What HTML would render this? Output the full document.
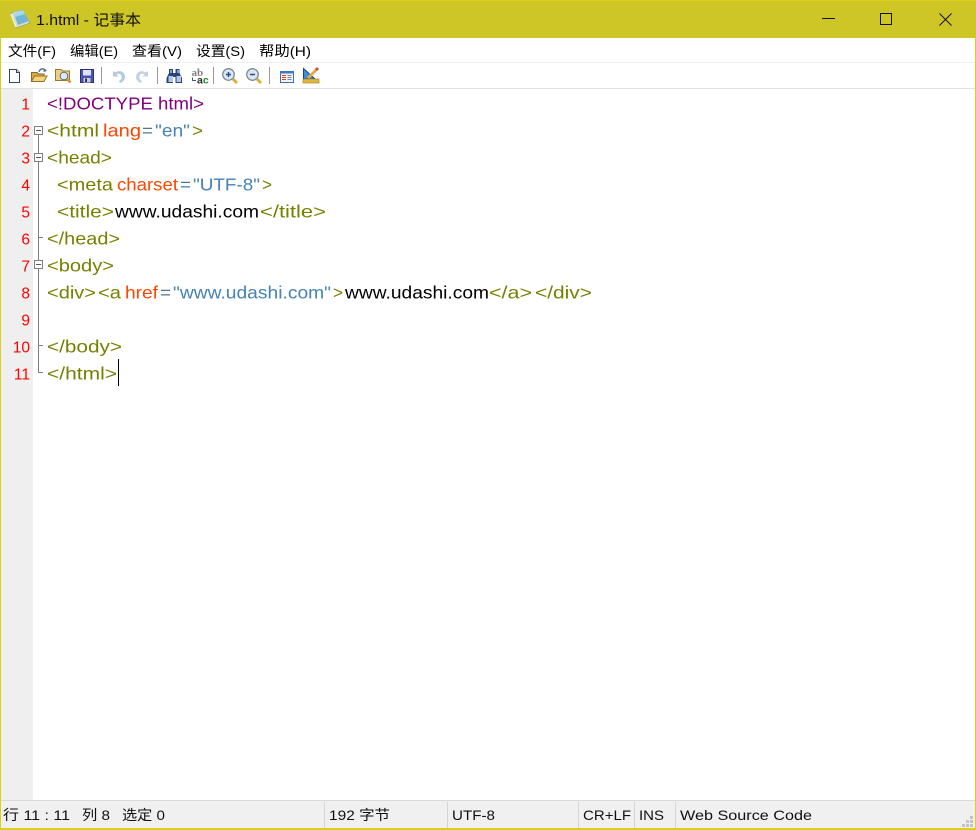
<!DOCTYPE html>
<html lang="zh">
<head>
<meta charset="UTF-8">
<title>1.html - 记事本</title>
<style>
html,body{margin:0;padding:0;background:#fff;width:976px;height:830px;overflow:hidden}
svg{display:block;position:absolute;left:0;top:0}
text{font-family:"Liberation Sans","Noto Sans CJK SC",sans-serif;white-space:pre}
.c text{font-size:17.5px}
.m text{font-size:14px;fill:#000}
.s text{font-size:14px;fill:#111}
.n text{font-size:15.5px;fill:#f00;text-anchor:end}
.t{fill:#768000}.a{fill:#ff4500}.e{fill:#4f7a94}.v{fill:#4682b4}.d{fill:#800080}.b{fill:#000}
</style>
</head>
<body>
<svg width="976" height="830" viewBox="0 0 976 830" xmlns="http://www.w3.org/2000/svg">
<!-- frame -->
<rect width="976" height="830" fill="#fff"/>
<rect width="976" height="38" fill="#cec626"/>
<rect width="976" height="1" fill="#dcd118"/>
<rect x="0" y="38" width="1" height="792" fill="#dcd118"/>
<rect x="975" y="38" width="1" height="792" fill="#dcd118"/>
<rect x="1" y="62" width="974" height="1" fill="#f0f0f0"/>
<rect x="1" y="88" width="974" height="1" fill="#e0e0e0"/>
<rect x="1" y="89" width="32" height="711" fill="#efefef"/>
<rect x="1" y="800" width="974" height="28" fill="#f0f0f0"/>
<rect x="1" y="800" width="974" height="1" fill="#d9d9d9"/>
<rect x="0" y="828" width="976" height="2" fill="#dcd118"/>

<!-- notepad icon -->
<path d="M11 13 L22 10 L30 23 L16 28 Z" fill="#d8dcc8" stroke="#8a8f70" stroke-width=".6"/>
<path d="M13 12 L23 10 L29 21 L18 25 Z" fill="#6fb6d6"/>
<path d="M13 12 L23 10 L25 14 L15 17 Z" fill="#a9d8e6"/>
<path d="M11 14 L16 27" stroke="#f0f0e0" stroke-width="1.5" fill="none"/>

<!-- title -->
<text x="36" y="25" font-size="15" fill="#111" textLength="105" lengthAdjust="spacingAndGlyphs">1.html - 记事本</text>

<!-- window controls -->
<rect x="822" y="18" width="13" height="1" fill="#111"/>
<rect x="880.5" y="13.5" width="11" height="11" fill="none" stroke="#111" stroke-width="1"/>
<path d="M939.5 13.5 L951.5 25.5 M951.5 13.5 L939.5 25.5" stroke="#111" stroke-width="1" fill="none"/>

<!-- menu -->
<g class="m">
<text x="8" y="56" textLength="48" lengthAdjust="spacingAndGlyphs">文件(F)</text>
<text x="70" y="56" textLength="48" lengthAdjust="spacingAndGlyphs">编辑(E)</text>
<text x="132" y="56" textLength="50" lengthAdjust="spacingAndGlyphs">查看(V)</text>
<text x="196" y="56" textLength="49" lengthAdjust="spacingAndGlyphs">设置(S)</text>
<text x="259" y="56" textLength="52" lengthAdjust="spacingAndGlyphs">帮助(H)</text>
</g>

<!-- toolbar: new -->
<path d="M9.5 69.5 H16.5 L19.5 72.5 V82.5 H9.5 Z" fill="#fbfcfe" stroke="#33475f"/>
<path d="M16.5 69.5 V72.5 H19.5" fill="#dfe6ef" stroke="#33475f"/>
<!-- open -->
<path d="M31.5 81.5 V72.5 H37 L38.5 74 H44 V81.5 Z" fill="#d9a94a" stroke="#8a6a28"/>
<path d="M31.5 81.5 L34.5 76 H47 L44 81.5 Z" fill="#f6d27a" stroke="#97742c"/>
<path d="M39 72 C40 68.5 43 68 45.5 70" fill="none" stroke="#4a6a98" stroke-width="1.3"/>
<path d="M44 68.5 L47 71 L43.5 72 Z" fill="#4a6a98"/>
<!-- browse -->
<path d="M55.5 80.5 V69.5 H61 L62.5 71 H69.5 V80.5 Z" fill="#ecd089" stroke="#97792f"/>
<circle cx="64" cy="76" r="3.8" fill="#dfeaf4" stroke="#5c6c80"/>
<path d="M67 79 L70.5 82.5" stroke="#d9902a" stroke-width="2.6"/>
<!-- save -->
<rect x="80.5" y="69.5" width="13" height="13" fill="#4a55b0" stroke="#2b3275"/>
<rect x="83" y="70" width="8" height="5.5" fill="#dfe3f6"/>
<rect x="83.5" y="78" width="7" height="4.5" fill="#c8cbdc"/>
<rect x="85" y="78.5" width="2" height="3.5" fill="#30345c"/>

<rect x="101" y="67" width="1" height="17" fill="#9a9a9a"/>

<!-- undo / redo (disabled) -->
<path d="M113 71 V76.5 H118.5 L116.5 74.5 C118.5 73 121 74 121.5 76 C122 78 121 80 119 81 L120 83 C124 82 126 78 124.5 74.5 C123 71 118.5 70 115.5 72.5 L113 71 Z" fill="#b6c8e0"/>
<path d="M148 71 V76.5 H142.5 L144.5 74.5 C142.5 73 140 74 139.5 76 C139 78 140 80 142 81 L141 83 C137 82 135 78 136.5 74.5 C138 71 142.5 70 145.5 72.5 L148 71 Z" fill="#c4d2e6"/>

<rect x="157" y="67" width="1" height="17" fill="#9a9a9a"/>

<!-- find binoculars -->
<path d="M169 69 h4 v4 h2.5 v-4 h4 v4 l2.5 5 v5 h-6.5 v-6 h-2.5 v6 h-6.5 v-5 l2.5 -5 Z" fill="#2a4478"/>
<rect x="168.5" y="76" width="4.5" height="6" fill="#b4c8e6"/>
<rect x="176.5" y="76" width="4.5" height="6" fill="#b4c8e6"/>
<rect x="170" y="70" width="2" height="3" fill="#8aa4d0"/>
<rect x="177" y="70" width="2" height="3" fill="#8aa4d0"/>

<!-- replace -->
<text x="191.500" y="76" font-size="11" font-weight="bold" fill="#808080" style="font-family:'Liberation Serif',serif">ab</text>
<text x="197" y="83.500" font-size="10.500" font-weight="bold" fill="#2a2a2a">a<tspan fill="#1e8a2a">c</tspan></text>
<path d="M192.500 77.500 V80.500 H196" fill="none" stroke="#3a5a90" stroke-width="1"/>

<rect x="213" y="67" width="1" height="17" fill="#9a9a9a"/>

<!-- zoom in -->
<circle cx="228.500" cy="74.500" r="5.800" fill="#dbe6ef" stroke="#7c8a98" stroke-width="1.300"/>
<path d="M226 74.500 H231 M228.500 72 V77" stroke="#2a4a90" stroke-width="1.500"/>
<path d="M233 79 L237 83" stroke="#d9b040" stroke-width="3"/>
<!-- zoom out -->
<circle cx="252.500" cy="74.500" r="5.800" fill="#dbe6ef" stroke="#7c8a98" stroke-width="1.300"/>
<path d="M250 74.500 H255" stroke="#2a4a90" stroke-width="1.500"/>
<path d="M257 79 L261 83" stroke="#d9b040" stroke-width="3"/>

<rect x="269" y="67" width="1" height="17" fill="#9a9a9a"/>

<!-- panel icon -->
<rect x="280.500" y="71.500" width="13" height="11" fill="#f6f3ee" stroke="#3f6fb5"/>
<rect x="280" y="71" width="14" height="2.500" fill="#3f78c8"/>
<path d="M282 75.500 h4 M282 77.500 h4 M282 79.500 h4" stroke="#d04a2a" stroke-width="1"/>
<path d="M287.500 75.500 h4 M287.500 77.500 h4 M287.500 79.500 h4" stroke="#7088b0" stroke-width="1"/>

<!-- settings icon -->
<path d="M303.500 68.500 L303.500 79 H315 Z" fill="#3f8fd8" stroke="#1f3f90"/>
<rect x="303" y="79" width="16" height="4" fill="#e0b83c" stroke="#9a7a20" stroke-width=".6"/>
<path d="M308 78 L317 69" stroke="#e2ac3a" stroke-width="2.800"/>
<path d="M316 70 L318 68" stroke="#c8503a" stroke-width="2.800"/>

<!-- line numbers -->
<g class="n">
<text x="30" y="109.500">1</text>
<text x="30" y="136.500">2</text>
<text x="30" y="163.500">3</text>
<text x="30" y="190.500">4</text>
<text x="30" y="217.500">5</text>
<text x="30" y="244.500">6</text>
<text x="30" y="271.500">7</text>
<text x="30" y="298.500">8</text>
<text x="30" y="325.500">9</text>
<text x="30" y="352.500">10</text>
<text x="30" y="379.500">11</text>
</g>

<!-- fold margin -->
<path d="M38.500 134 V153 M38.500 161 V260 M38.500 268 V372.500 H43 M39 237.500 H43 M39 345.500 H43" stroke="#808080" fill="none"/>
<g fill="#fff" stroke="#808080">
<rect x="34.500" y="126.500" width="8" height="8"/>
<rect x="34.500" y="153.500" width="8" height="8"/>
<rect x="34.500" y="260.500" width="8" height="8"/>
</g>
<path d="M36 130.500 H41 M36 157.500 H41 M36 264.500 H41" stroke="#555" fill="none"/>

<!-- code -->
<g class="c">
<text class="d" x="47" y="109.500" textLength="157" lengthAdjust="spacingAndGlyphs">&lt;!DOCTYPE html&gt;</text>

<text class="t" x="47" y="136.500" textLength="52" lengthAdjust="spacingAndGlyphs">&lt;html</text>
<text class="a" x="103" y="136.500" textLength="38" lengthAdjust="spacingAndGlyphs">lang</text>
<text class="e" x="142" y="136.500" textLength="11" lengthAdjust="spacingAndGlyphs">=</text>
<text class="v" x="155" y="136.500" textLength="35" lengthAdjust="spacingAndGlyphs">"en"</text>
<text class="t" x="192" y="136.500" textLength="11" lengthAdjust="spacingAndGlyphs">&gt;</text>

<text class="t" x="47" y="163.500" textLength="65" lengthAdjust="spacingAndGlyphs">&lt;head&gt;</text>

<text class="t" x="57" y="190.500" textLength="56" lengthAdjust="spacingAndGlyphs">&lt;meta</text>
<text class="a" x="117" y="190.500" textLength="61" lengthAdjust="spacingAndGlyphs">charset</text>
<text class="e" x="180" y="190.500" textLength="11" lengthAdjust="spacingAndGlyphs">=</text>
<text class="v" x="193" y="190.500" textLength="67" lengthAdjust="spacingAndGlyphs">"UTF-8"</text>
<text class="t" x="262" y="190.500" textLength="10" lengthAdjust="spacingAndGlyphs">&gt;</text>

<text class="t" x="57" y="217.500" textLength="57" lengthAdjust="spacingAndGlyphs">&lt;title&gt;</text>
<text class="b" x="115" y="217.500" textLength="144" lengthAdjust="spacingAndGlyphs">www.udashi.com</text>
<text class="t" x="260" y="217.500" textLength="66" lengthAdjust="spacingAndGlyphs">&lt;/title&gt;</text>

<text class="t" x="47" y="244.500" textLength="73" lengthAdjust="spacingAndGlyphs">&lt;/head&gt;</text>

<text class="t" x="47" y="271.500" textLength="67" lengthAdjust="spacingAndGlyphs">&lt;body&gt;</text>

<text class="t" x="47" y="298.500" textLength="49" lengthAdjust="spacingAndGlyphs">&lt;div&gt;</text>
<text class="t" x="98" y="298.500" textLength="23" lengthAdjust="spacingAndGlyphs">&lt;a</text>
<text class="a" x="125" y="298.500" textLength="33" lengthAdjust="spacingAndGlyphs">href</text>
<text class="e" x="160" y="298.500" textLength="11" lengthAdjust="spacingAndGlyphs">=</text>
<text class="v" x="173" y="298.500" textLength="158" lengthAdjust="spacingAndGlyphs">"www.udashi.com"</text>
<text class="t" x="333" y="298.500" textLength="10" lengthAdjust="spacingAndGlyphs">&gt;</text>
<text class="b" x="345" y="298.500" textLength="144" lengthAdjust="spacingAndGlyphs">www.udashi.com</text>
<text class="t" x="489" y="298.500" textLength="43" lengthAdjust="spacingAndGlyphs">&lt;/a&gt;</text>
<text class="t" x="535" y="298.500" textLength="57" lengthAdjust="spacingAndGlyphs">&lt;/div&gt;</text>

<text class="t" x="47" y="352.500" textLength="75" lengthAdjust="spacingAndGlyphs">&lt;/body&gt;</text>
<text class="t" x="47" y="379.500" textLength="70" lengthAdjust="spacingAndGlyphs">&lt;/html&gt;</text>
</g>
<rect x="118" y="359" width="1" height="27" fill="#000"/>

<!-- status bar -->
<g fill="#d4d4d4">
<rect x="324" y="802" width="1" height="26"/>
<rect x="447" y="802" width="1" height="26"/>
<rect x="578" y="802" width="1" height="26"/>
<rect x="634" y="802" width="1" height="26"/>
<rect x="675" y="802" width="1" height="26"/>
</g>
<g class="s">
<text x="3" y="820" textLength="67" lengthAdjust="spacingAndGlyphs">行 11 : 11</text>
<text x="82" y="820" textLength="28" lengthAdjust="spacingAndGlyphs">列 8</text>
<text x="122" y="820" textLength="43" lengthAdjust="spacingAndGlyphs">选定 0</text>
<text x="329" y="820" textLength="61" lengthAdjust="spacingAndGlyphs">192 字节</text>
<text x="452" y="820" textLength="43" lengthAdjust="spacingAndGlyphs">UTF-8</text>
<text x="583" y="820" textLength="48" lengthAdjust="spacingAndGlyphs">CR+LF</text>
<text x="639" y="820" textLength="25" lengthAdjust="spacingAndGlyphs">INS</text>
<text x="680" y="820" textLength="132" lengthAdjust="spacingAndGlyphs">Web Source Code</text>
</g>

<!-- grip -->
<g fill="#c4c4c4">
<rect x="970" y="816" width="3" height="3"/>
<rect x="966" y="820" width="3" height="3"/>
<rect x="970" y="820" width="3" height="3"/>
<rect x="962" y="824" width="3" height="3"/>
<rect x="966" y="824" width="3" height="3"/>
<rect x="970" y="824" width="3" height="3"/>
</g>
</svg>
</body>
</html>
